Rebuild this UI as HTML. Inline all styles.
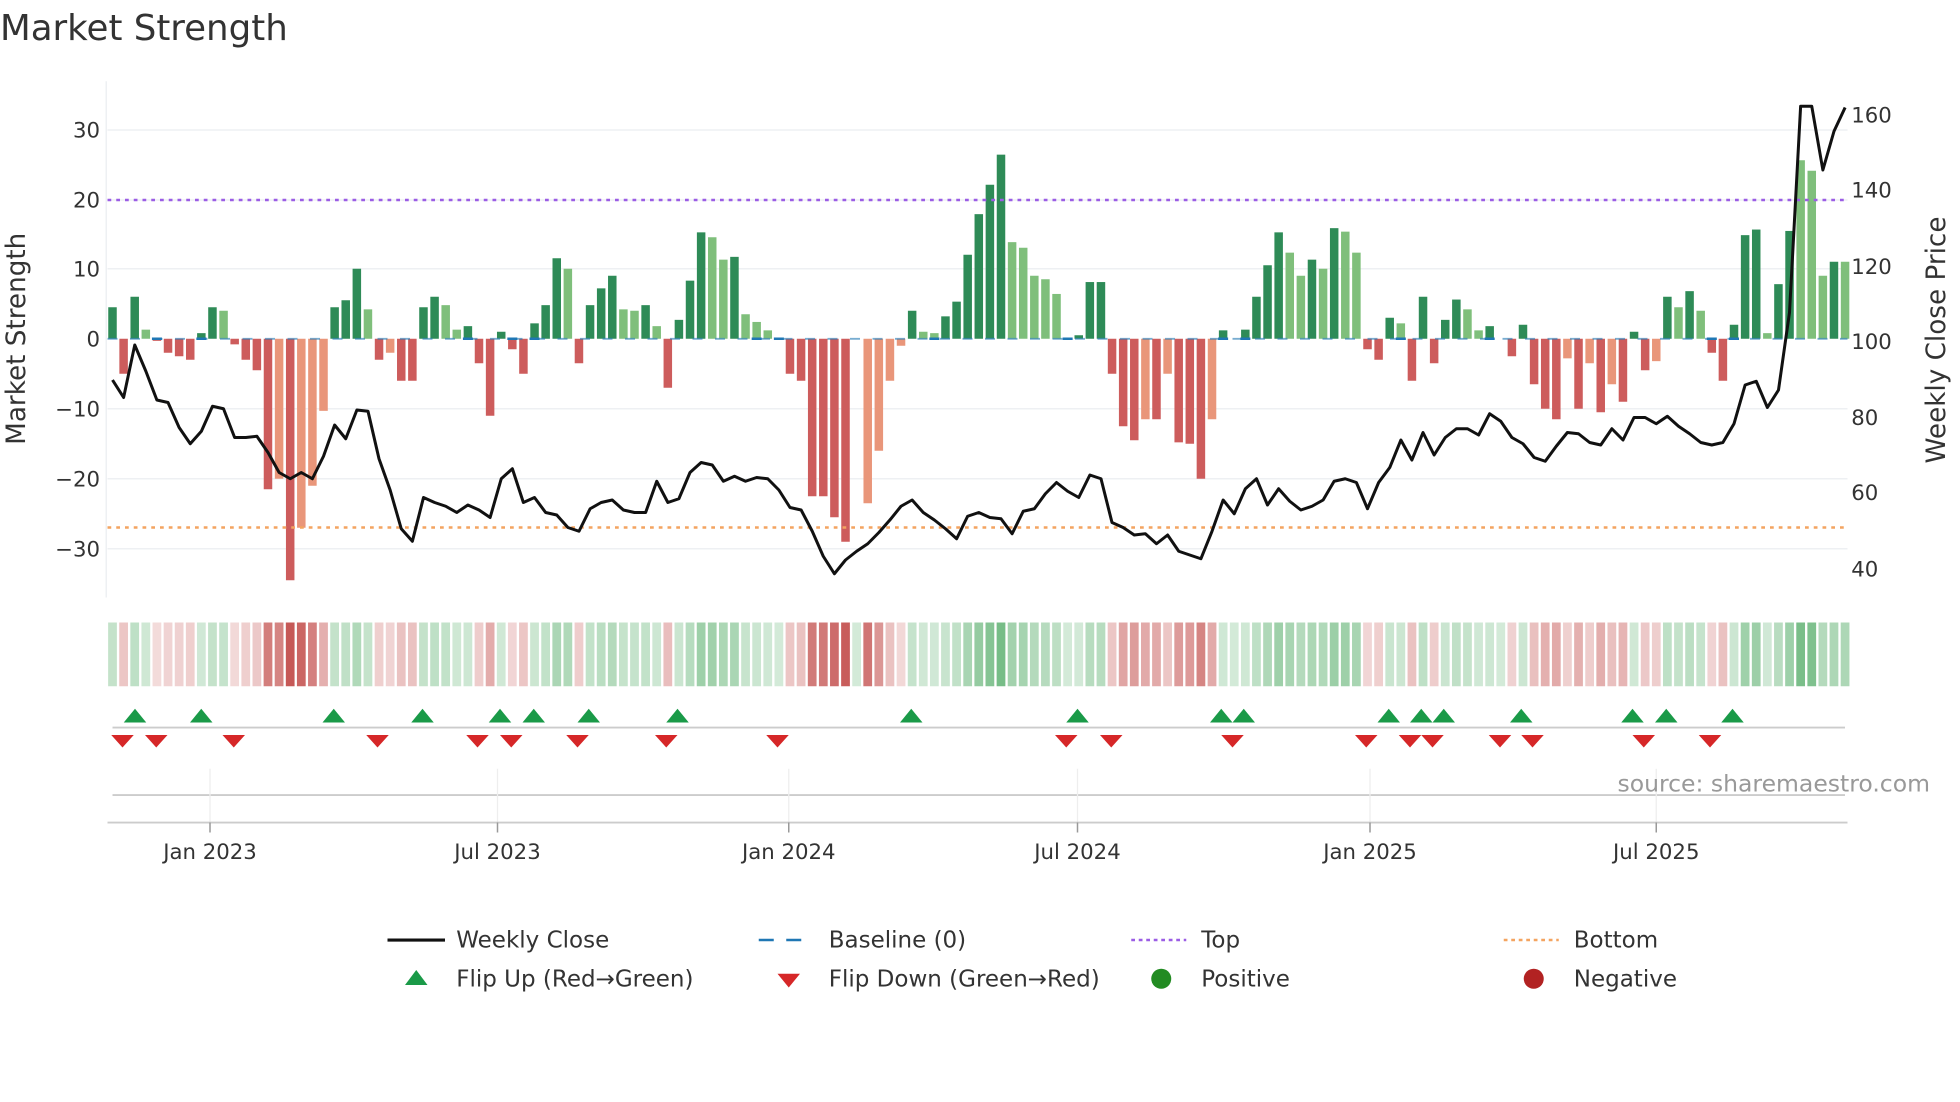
<!DOCTYPE html>
<html><head><meta charset="utf-8"><style>
html,body{margin:0;padding:0;background:#fff;}
svg{display:block;font-family:"DejaVu Sans","Liberation Sans",sans-serif;}
</style></head><body>
<svg id="s" width="1960" height="1102" viewBox="0 0 1568 881.6" xmlns="http://www.w3.org/2000/svg">
<rect width="1568" height="881.6" fill="#fff"/>
<text x="0" y="32" font-size="28.5" fill="#333">Market Strength</text>
<g id="grid" stroke="#eef0f3" stroke-width="1.2">
<line x1="86" x2="1478" y1="104" y2="104"/><line x1="86" x2="1478" y1="160" y2="160"/>
<line x1="86" x2="1478" y1="215" y2="215"/><line x1="86" x2="1478" y1="327" y2="327"/>
<line x1="86" x2="1478" y1="383" y2="383"/><line x1="86" x2="1478" y1="439" y2="439"/>
<line x1="85" x2="85" y1="65" y2="478"/>
</g>
<g font-size="17" fill="#333" text-anchor="end">
<text x="80" y="110">30</text><text x="80" y="166">20</text><text x="80" y="221">10</text>
<text x="80" y="277">0</text><text x="80" y="333">−10</text><text x="80" y="389">−20</text><text x="80" y="445">−30</text>
</g>
<g font-size="17" fill="#333">
<text x="1481" y="98">160</text><text x="1481" y="158">140</text><text x="1481" y="219">120</text>
<text x="1481" y="279">100</text><text x="1481" y="340">80</text><text x="1481" y="400">60</text><text x="1481" y="461">40</text>
</g>
<text transform="translate(20,271) rotate(-90)" text-anchor="middle" font-size="21" fill="#333">Market Strength</text>
<text transform="translate(1556,272) rotate(-90)" text-anchor="middle" font-size="21" fill="#333">Weekly Close Price</text>
<g id="bars"></g>
<line x1="86" x2="1478" y1="160" y2="160" stroke="#9b5de5" stroke-width="2" stroke-dasharray="3,4"/>
<line x1="86" x2="1478" y1="422" y2="422" stroke="#f4a460" stroke-width="2" stroke-dasharray="3,4"/>
<polyline id="price" fill="none" stroke="#111" stroke-width="2.4" stroke-linejoin="round"/>
<g id="heat"></g>
<line x1="90" x2="1476" y1="582" y2="582" stroke="#ccc" stroke-width="1.5"/>
<line x1="90" x2="1476" y1="636" y2="636" stroke="#ccc" stroke-width="1.5"/>
<g stroke="#eee" stroke-width="1"><line x1="168" x2="168" y1="615" y2="658"/><line x1="398" x2="398" y1="615" y2="658"/><line x1="631" x2="631" y1="615" y2="658"/><line x1="862" x2="862" y1="615" y2="658"/><line x1="1096" x2="1096" y1="615" y2="658"/><line x1="1325" x2="1325" y1="615" y2="658"/></g>
<line x1="86" x2="1478" y1="658" y2="658" stroke="#ccc" stroke-width="1.5"/>
<g stroke="#999" stroke-width="1.2"><line x1="168" x2="168" y1="658" y2="666"/><line x1="398" x2="398" y1="658" y2="666"/><line x1="631" x2="631" y1="658" y2="666"/><line x1="862" x2="862" y1="658" y2="666"/><line x1="1096" x2="1096" y1="658" y2="666"/><line x1="1325" x2="1325" y1="658" y2="666"/></g>
<g font-size="17" fill="#333" text-anchor="middle">
<text x="168" y="687">Jan 2023</text><text x="398" y="687">Jul 2023</text><text x="631" y="687">Jan 2024</text>
<text x="862" y="687">Jul 2024</text><text x="1096" y="687">Jan 2025</text><text x="1325" y="687">Jul 2025</text>
</g>
<g id="marks"></g>
<text x="1544" y="633" font-size="18.8" fill="#999" text-anchor="end">source: sharemaestro.com</text>
<g font-size="18.4" fill="#333">
<line x1="310" x2="356" y1="752" y2="752" stroke="#111" stroke-width="2.5"/><text x="365" y="758">Weekly Close</text>
<line x1="607" x2="651" y1="752" y2="752" stroke="#1f77b4" stroke-width="2" stroke-dasharray="12,10"/><text x="663" y="758">Baseline (0)</text>
<line x1="905" x2="949" y1="752" y2="752" stroke="#9b5de5" stroke-width="2" stroke-dasharray="3,3"/><text x="961" y="758">Top</text>
<line x1="1203" x2="1247" y1="752" y2="752" stroke="#f4a460" stroke-width="2" stroke-dasharray="3,3"/><text x="1259" y="758">Bottom</text>
<polygon points="324,788 342,788 333,776" fill="#1a9a48"/><text x="365" y="789">Flip Up (Red→Green)</text>
<polygon points="622,779 640,779 631,790" fill="#d62728"/><text x="663" y="789">Flip Down (Green→Red)</text>
<circle cx="929" cy="783" r="8" fill="#228b22"/><text x="961" y="789">Positive</text>
<circle cx="1227" cy="783" r="8" fill="#b22222"/><text x="1259" y="789">Negative</text>
</g>
</svg>
<script>
var V="4.5g -5r 6g 1.3l -0.3r -2r -2.5r -3r 0.8g 4.5g 4l -0.8r -3r -4.5r -21.5r -20s -34.5r -27s -21s -10.3s 4.5g 5.5g 10g 4.2l -3r -2s -6r -6r 4.5g 6g 4.8l 1.3l 1.8g -3.5r -11r 1g -1.5r -5r 2.2g 4.8g 11.5g 10l -3.5r 4.8g 7.2g 9g 4.2l 4l 4.8g 1.8l -7r 2.7g 8.3g 15.2g 14.5l 11.3l 11.7g 3.5l 2.4l 1.2l 0r -5r -6r -22.5r -22.5r -25.5r -29r 0r -23.5s -16s -6s -1s 4g 1l 0.8l 3.2g 5.3g 12g 17.8g 22g 26.3g 13.8l 13l 9l 8.5l 6.4l 0r 0.5g 8.1g 8.1g -5r -12.5r -14.5r -11.5s -11.5r -5s -14.8r -15r -20r -11.5s 1.2g 0r 1.3g 6g 10.5g 15.2g 12.3l 9l 11.3g 10l 15.8g 15.3l 12.3l -1.5r -3r 3g 2.2l -6r 6g -3.5r 2.7g 5.6g 4.2l 1.2l 1.8g 0r -2.5r 2g -6.5r -10r -11.5r -2.8s -10r -3.5s -10.5r -6.5s -9r 1g -4.5r -3.2s 6g 4.5l 6.8g 4l -2r -6r 2g 14.8g 15.6g 0.8l 7.8g 15.4g 25.5l 24l 9l 11g 11l".split(" ");
var C={g:"#2e8b57",l:"#7fbf7b",r:"#cd5c5c",s:"#e9967a"};
var b="",h="";
function X(i){return 90+i*8.885;}
V.forEach(function(t,i){var v=parseFloat(t),c=C[t.slice(-1)],x=X(i);
 if(v!==0){var y=v>0?271-v*5.6:271,hh=Math.abs(v)*5.6;b+='<rect x="'+(x-3.4)+'" y="'+y+'" width="6.8" height="'+hh+'" fill="'+c+'"/>';}
 if(Math.abs(v)<2.5&&i%2==0)b+='<line x1="'+(x-4)+'" x2="'+(x+4)+'" y1="271" y2="271" stroke="#1f77b4" stroke-width="2"/>';
 var a=Math.min(Math.abs(v)/30,1),col;
 if(v>=0){var t2=0.25+a*0.6;col="rgb("+Math.round(255-(255-80)*t2)+","+Math.round(255-(255-170)*t2)+","+Math.round(255-(255-100)*t2)+")";}
 else{var t3=0.2+a*0.75;col="rgb("+Math.round(255-(255-195)*t3)+","+Math.round(255-(255-80)*t3)+","+Math.round(255-(255-78)*t3)+")";}
 h+='<rect x="'+(x-3.5)+'" y="498" width="7" height="51" fill="'+col+'"/>';
});
b+='<line x1="86" x2="1478" y1="271" y2="271" stroke="#1f77b4" stroke-width="1.5" stroke-dasharray="8,10" opacity="0.6"/>';
document.getElementById("bars").innerHTML=b;document.getElementById("heat").innerHTML=h;
var P=[304,318,276,297,320,322,342,355,345,325,327,350,350,349,362,378,383,378,383,365,340,351,328,329,367,392,423,433,398,402,405,410,404,408,414,383,375,402,398,410,412,422,425,407,402,400,408,410,410,385,402,399,378,370,372,385,381,385,382,383,392,406,408,425,445,459,448,441,435,426,416,405,400,410,416,423,431,413,410,414,415,427,409,407,395,386,393,398,380,383,418,422,428,427,435,428,441,444,447,425,400,411,391,383,404,391,401,408,405,400,385,383,386,407,386,374,352,368,346,364,350,343,343,348,331,337,350,355,366,369,357,346,347,354,356,343,352,334,334,339,333,341,347,354,356,354,339,308,305,326,312,250,85,85,136,105,86];
document.getElementById("price").setAttribute("points",P.map(function(y,i){return X(i).toFixed(1)+","+y;}).join(" "));
var up=[108,161,267,338,400,427,471,542,729,862,977,995,1111,1137,1155,1217,1306,1333,1386],dn=[98,125,187,302,382,409,462,533,622,853,889,986,1093,1128,1146,1200,1226,1315,1368],m="";
up.forEach(function(x){m+='<polygon points="'+(x-9)+',578 '+(x+9)+',578 '+x+',567" fill="#1a9a48"/>';});
dn.forEach(function(x){m+='<polygon points="'+(x-9)+',588 '+(x+9)+',588 '+x+',598" fill="#d62728"/>';});
document.getElementById("marks").innerHTML=m;
</script>
</body></html>
